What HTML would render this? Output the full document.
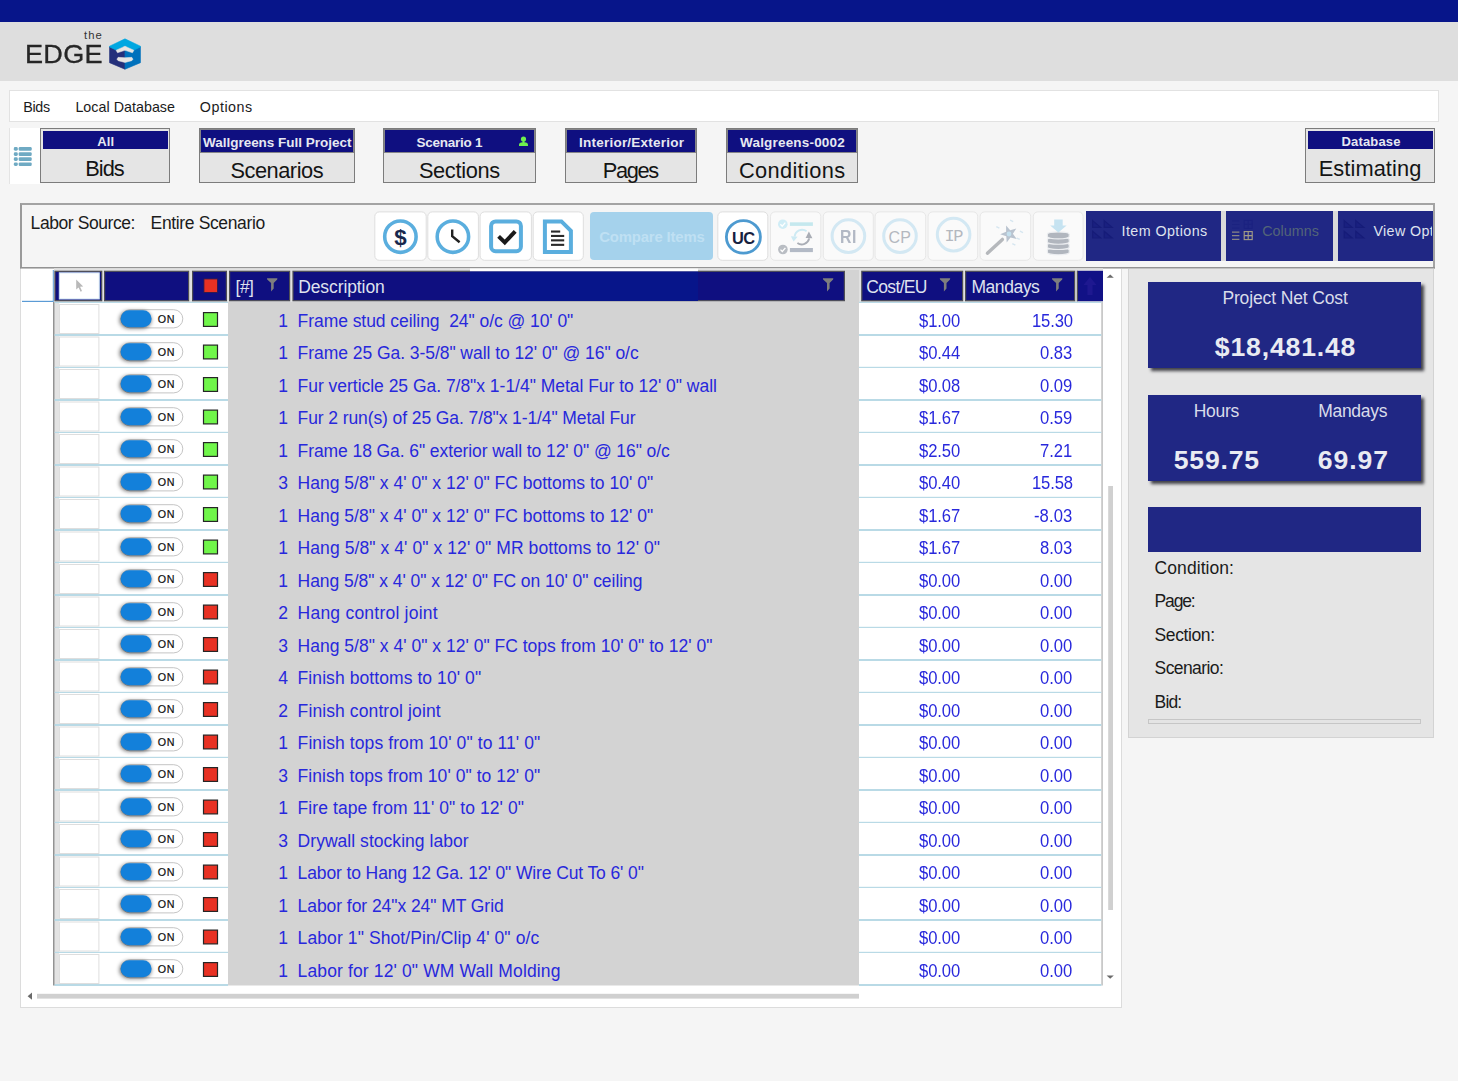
<!DOCTYPE html>
<html lang="en"><head><meta charset="utf-8"><title>The EDGE - Labor</title>
<style>
html,body{margin:0;padding:0;}
body{width:1458px;height:1081px;overflow:hidden;background:#f5f5f5;font-family:"Liberation Sans",sans-serif;}
#app{position:relative;width:1458px;height:1081px;overflow:hidden;background:#f5f5f5;}
.b{position:absolute;box-sizing:border-box;}
.t{position:absolute;white-space:pre;line-height:1;}
svg{position:absolute;overflow:visible;}

</style></head>
<body>
<div id="app">
<div class="b " style="left:0.00px;top:0.00px;width:1458.00px;height:22.00px;background:#07158a;"></div>
<div class="b " style="left:0.00px;top:22.00px;width:1458.00px;height:59.00px;background:#dedede;"></div>
<span id="t1" class="t " style="left:84.00px;top:30.00px;font-size:11.30px;color:#333;letter-spacing:1.041px;">the</span>
<span id="t2" class="t " style="left:24.60px;top:42.00px;font-size:25.20px;color:#262626;letter-spacing:0.265px;transform:scaleX(1.0750);transform-origin:0 0;-webkit-text-stroke:0.3px #262626;">EDGE</span>
<svg style="left:104px;top:34px" width="42" height="40" viewBox="104 34 42 40">
<polygon points="109.55,46.9 124.98,47 124.98,69.2 109.55,62.7" fill="#25307b" stroke="#25307b" stroke-width="0.6" stroke-linejoin="round"/>
<polygon points="140.45,46.9 124.98,47 124.98,69.2 140.45,62.7" fill="#0071bc" stroke="#0071bc" stroke-width="0.6" stroke-linejoin="round"/>
<polygon points="124.98,38.85 140.45,46.2 140.45,47.0 133.6,50.2 124.98,46.1 116.4,50.2 109.55,47.0 109.55,46.2" fill="#00a7e1" stroke="#00a7e1" stroke-width="0.6" stroke-linejoin="round"/>
<polygon points="124.98,46.2 133.9,50.3 132.5,52.75 124.98,50.3 117.5,52.75 116.1,50.3" fill="#e7e5e3" stroke="#e7e5e3" stroke-width="0.5" stroke-linejoin="round"/>
<polygon points="116.9,59.15 118.1,57.35 124.98,57.7 131.8,57.35 133.0,59.15 131.8,60.65 124.98,62.5 118.1,60.65" fill="#e7e5e3" stroke="#e7e5e3" stroke-width="0.5" stroke-linejoin="round"/>
</svg>
<div class="b " style="left:9.00px;top:90.00px;width:1430.00px;height:32.00px;background:#fff;border:1px solid #e2e2e2;"></div>
<span id="t3" class="t " style="left:23.20px;top:100.00px;font-size:14.30px;color:#1b1b1b;letter-spacing:-0.271px;">Bids</span>
<span id="t4" class="t " style="left:75.40px;top:100.00px;font-size:14.30px;color:#1b1b1b;letter-spacing:0.019px;">Local Database</span>
<span id="t5" class="t " style="left:199.80px;top:100.00px;font-size:14.30px;color:#1b1b1b;letter-spacing:0.520px;">Options</span>
<div class="b " style="left:9.00px;top:128.00px;width:31.00px;height:56.00px;background:#fff;border-left:1px solid #e4e4e4;"></div>
<svg style="left:0;top:0" width="40" height="190" viewBox="0 0 40 190"><rect x="13.8" y="147.1" width="4.0" height="3.6" rx="1.4" fill="#6faac3"/><rect x="18.7" y="147.1" width="13.0" height="3.6" rx="1.2" fill="#6faac3"/><rect x="13.8" y="152.3" width="4.0" height="3.6" rx="1.4" fill="#6faac3"/><rect x="18.7" y="152.3" width="13.0" height="3.6" rx="1.2" fill="#6faac3"/><rect x="13.8" y="157.3" width="4.0" height="3.6" rx="1.4" fill="#6faac3"/><rect x="18.7" y="157.3" width="13.0" height="3.6" rx="1.2" fill="#6faac3"/><rect x="13.8" y="162.4" width="4.0" height="3.6" rx="1.4" fill="#6faac3"/><rect x="18.7" y="162.4" width="13.0" height="3.6" rx="1.2" fill="#6faac3"/></svg>
<div class="b " style="left:40.00px;top:128.00px;width:130.00px;height:55.00px;background:#e5e5e5;border:1px solid #7c7c7c;"></div>
<div class="b " style="left:43.00px;top:131.00px;width:125.00px;height:18.00px;background:#0f0f80;"></div>
<span id="t6" class="t " style="left:97.20px;top:135.00px;font-size:13.00px;color:#e6e8f1;font-weight:bold;letter-spacing:0.188px;">All</span>
<span id="t7" class="t " style="left:85.30px;top:158.00px;font-size:21.80px;color:#141414;letter-spacing:-1.002px;">Bids</span>
<div class="b " style="left:199.00px;top:128.00px;width:156.00px;height:55.00px;background:#e5e5e5;border:1px solid #7c7c7c;"></div>
<div class="b " style="left:200.00px;top:129.00px;width:154.00px;height:24.00px;background:#0f0f80;border:1px solid #858588;"></div>
<span id="t8" class="t " style="left:203.00px;top:136.00px;font-size:13.50px;color:#e6e8f1;font-weight:bold;letter-spacing:-0.018px;">Wallgreens Full Project</span>
<span id="t9" class="t " style="left:230.40px;top:160.00px;font-size:21.80px;color:#141414;letter-spacing:-0.467px;">Scenarios</span>
<div class="b " style="left:383.00px;top:128.00px;width:153.00px;height:55.00px;background:#e5e5e5;border:1px solid #7c7c7c;"></div>
<div class="b " style="left:384.00px;top:129.00px;width:151.00px;height:24.00px;background:#0f0f80;border:1px solid #858588;"></div>
<span id="t10" class="t " style="left:416.50px;top:136.00px;font-size:13.50px;color:#e6e8f1;font-weight:bold;letter-spacing:-0.255px;">Scenario 1</span>
<span id="t11" class="t " style="left:418.90px;top:160.00px;font-size:21.80px;color:#141414;letter-spacing:-0.344px;">Sections</span>
<div class="b " style="left:565.00px;top:128.00px;width:132.00px;height:55.00px;background:#e5e5e5;border:1px solid #7c7c7c;"></div>
<div class="b " style="left:566.00px;top:129.00px;width:130.00px;height:24.00px;background:#0f0f80;border:1px solid #858588;"></div>
<span id="t12" class="t " style="left:579.00px;top:136.00px;font-size:13.50px;color:#e6e8f1;font-weight:bold;letter-spacing:0.232px;">Interior/Exterior</span>
<span id="t13" class="t " style="left:602.75px;top:160.00px;font-size:21.80px;color:#141414;letter-spacing:-1.328px;">Pages</span>
<div class="b " style="left:726.00px;top:128.00px;width:132.00px;height:55.00px;background:#e5e5e5;border:1px solid #7c7c7c;"></div>
<div class="b " style="left:727.00px;top:129.00px;width:130.00px;height:24.00px;background:#0f0f80;border:1px solid #858588;"></div>
<span id="t14" class="t " style="left:740.00px;top:136.00px;font-size:13.50px;color:#e6e8f1;font-weight:bold;letter-spacing:0.191px;">Walgreens-0002</span>
<span id="t15" class="t " style="left:738.90px;top:160.00px;font-size:21.80px;color:#141414;letter-spacing:0.356px;">Conditions</span>
<div class="b " style="left:1305.00px;top:128.00px;width:130.00px;height:55.00px;background:#e5e5e5;border:1px solid #7c7c7c;"></div>
<div class="b " style="left:1308.00px;top:131.00px;width:125.00px;height:18.00px;background:#0f0f80;"></div>
<span id="t16" class="t " style="left:1341.60px;top:135.00px;font-size:13.00px;color:#e6e8f1;font-weight:bold;letter-spacing:0.141px;">Database</span>
<span id="t17" class="t " style="left:1318.70px;top:158.00px;font-size:21.80px;color:#141414;letter-spacing:0.093px;">Estimating</span>
<svg style="left:516px;top:134px" width="16" height="16" viewBox="516 134 16 16">
<circle cx="523.5" cy="139.0" r="2.6" fill="#6eee4e"/>
<path d="M522.6,141 h1.8 v1.2 q3.6,0.3 3.6,2.6 v1.2 h-9 v-1.2 q0,-2.3 3.6,-2.6 Z" fill="#6eee4e"/></svg>
<div class="b " style="left:20.00px;top:267.00px;width:1102.00px;height:741.00px;background:#fff;border:1px solid #dcdcdc;"></div>
<div class="b " style="left:1128.00px;top:267.00px;width:306.00px;height:471.00px;background:#e5e5e5;border:1px solid #d3d3d3;"></div>
<div class="b " style="left:20.00px;top:203.00px;width:1415.00px;height:66.00px;background:#f5f5f5;border:2px solid #a3a3a3;border-bottom-color:#c2c2c2;border-left-color:#9a9a9a;"></div>
<div class="b " style="left:20.00px;top:267.00px;width:1415.00px;height:1.00px;background:#939393;"></div>
<span id="t18" class="t " style="left:30.60px;top:215.00px;font-size:17.50px;color:#1b1b1b;letter-spacing:-0.428px;">Labor Source:</span>
<span id="t19" class="t " style="left:150.60px;top:215.00px;font-size:17.50px;color:#1b1b1b;letter-spacing:-0.361px;">Entire Scenario</span>
<div class="b " style="left:590.20px;top:211.80px;width:122.60px;height:48.40px;background:#a5d2ec;border-radius:4px;"></div>
<span id="t20" class="t " style="left:599.20px;top:230.00px;font-size:14.90px;color:#bfe0f3;font-weight:bold;letter-spacing:-0.166px;">Compare Items</span>
<svg style="left:0;top:0" width="1458" height="300" viewBox="0 0 1458 300"><rect x="374.80" y="211.9" width="51.40" height="48.4" rx="4.5" fill="#fff" stroke="#dedede" stroke-width="1"/><rect x="427.80" y="211.9" width="50.60" height="48.4" rx="4.5" fill="#fff" stroke="#dedede" stroke-width="1"/><rect x="480.10" y="211.9" width="51.30" height="48.4" rx="4.5" fill="#fff" stroke="#dedede" stroke-width="1"/><rect x="533.20" y="211.9" width="50.10" height="48.4" rx="4.5" fill="#fff" stroke="#dedede" stroke-width="1"/><rect x="717.80" y="211.9" width="50.00" height="48.4" rx="4.5" fill="#fff" stroke="#dedede" stroke-width="1"/><rect x="770.50" y="211.9" width="50.30" height="48.4" rx="4.5" fill="#fafafa" stroke="#e7e7e7" stroke-width="1"/><rect x="823.30" y="211.9" width="50.00" height="48.4" rx="4.5" fill="#fafafa" stroke="#e7e7e7" stroke-width="1"/><rect x="875.10" y="211.9" width="50.60" height="48.4" rx="4.5" fill="#fafafa" stroke="#e7e7e7" stroke-width="1"/><rect x="928.10" y="211.9" width="49.60" height="48.4" rx="4.5" fill="#fafafa" stroke="#e7e7e7" stroke-width="1"/><rect x="980.10" y="211.9" width="50.60" height="48.4" rx="4.5" fill="#fafafa" stroke="#e7e7e7" stroke-width="1"/><rect x="1033.30" y="211.9" width="49.80" height="48.4" rx="4.5" fill="#fafafa" stroke="#e7e7e7" stroke-width="1"/><circle cx="400.4" cy="236.7" r="15.7" fill="none" stroke="#5aaede" stroke-width="3.6"/><circle cx="452.9" cy="236.7" r="15.7" fill="none" stroke="#5aaede" stroke-width="3.6"/><path d="M452.2,229.6 L452.2,236.2 L459.6,242.2" fill="none" stroke="#222" stroke-width="2.4"/><rect x="491.1" y="221.4" width="29.8" height="29.8" rx="4.5" fill="none" stroke="#5aaede" stroke-width="4"/><path d="M498.6,236.4 L504.8,242.4 L515.2,231.4" fill="none" stroke="#1a1a1a" stroke-width="4"/><path d="M544.9,221.4 L561.4,221.4 L570.9,230.9 L570.9,252 L544.9,252 Z" fill="none" stroke="#5aaede" stroke-width="4"/><rect x="551" y="230.5" width="9.2" height="2.1" fill="#2a2a2a"/><rect x="551" y="234.9" width="13.2" height="2.1" fill="#2a2a2a"/><rect x="551" y="239.3" width="13.2" height="2.1" fill="#2a2a2a"/><rect x="551" y="243.8" width="13.2" height="2.1" fill="#2a2a2a"/><ellipse cx="743.4" cy="236.9" rx="17" ry="16.3" fill="none" stroke="#4d9ad0" stroke-width="2.8"/><circle cx="782.8" cy="224.2" r="4.8" fill="#d0edf6"/><path d="M780.4,224.3 l1.8,1.9 l3.1,-3.6" fill="none" stroke="#fff" stroke-width="1.3"/><rect x="789.9" y="222.3" width="23" height="3.6" fill="#c5e8ee"/><circle cx="782.9" cy="249.5" r="4.8" fill="#b9bdc3"/><path d="M780.5,249.6 l1.8,1.9 l3.1,-3.6" fill="none" stroke="#fff" stroke-width="1.3"/><rect x="789.9" y="248" width="23" height="4.1" fill="#b3bac6"/><path d="M794.6,236.6 A7.6,7.6 0 0 1 806.6,231.2" fill="none" stroke="#cdeaf3" stroke-width="1.9"/><path d="M790.8,236.2 L797.6,236.8 L793.6,241.6 Z" fill="#cdeaf3"/><path d="M809.2,238.4 A7.6,7.6 0 0 1 797.4,243.0" fill="none" stroke="#a9adb5" stroke-width="1.9"/><path d="M808.9,231.6 L812.4,238.2 L805.6,238.0 Z" fill="#a9adb5"/><circle cx="848.4" cy="236.1" r="16.3" fill="none" stroke="#d3e8f3" stroke-width="3"/><circle cx="900.0" cy="236.1" r="16.3" fill="none" stroke="#d3e8f3" stroke-width="3"/><circle cx="953.6" cy="234.6" r="16.3" fill="none" stroke="#d3e8f3" stroke-width="3"/><path d="M987.4,253.2 L1002.4,239.4" stroke="#b5b8bc" stroke-width="3.4" stroke-linecap="round"/><polygon points="1006.1,225.4 1010.2,230.3 1016.3,228.4 1012.9,233.8 1016.7,238.9 1010.5,237.4 1006.7,242.6 1006.3,236.2 1000.2,234.2 1006.1,231.8" fill="#b9c3cf"/><circle cx="1009.0" cy="234.0" r="2.4" fill="#c4e0ee"/><rect x="996.6" y="226.0" width="3.4" height="1.4" fill="#d6e6f0" transform="rotate(25 996.6 226.0)"/><rect x="1010.4" y="219.6" width="3.4" height="1.4" fill="#d6e6f0" transform="rotate(25 1010.4 219.6)"/><rect x="1020.2" y="230.6" width="3.4" height="1.4" fill="#d6e6f0" transform="rotate(25 1020.2 230.6)"/><rect x="1012.6" y="243.0" width="3.4" height="1.4" fill="#d6e6f0" transform="rotate(25 1012.6 243.0)"/><rect x="1017.0" y="237.4" width="3.4" height="1.4" fill="#d6e6f0" transform="rotate(25 1017.0 237.4)"/><path d="M1047.4,250.1 a10.9,2.3 0 0 1 21.8,0 v2.4 a10.9,2.3 0 0 1 -21.8,0 Z" fill="#b1b6be" stroke="#eceef1" stroke-width="1.1"/><path d="M1047.4,244.8 a10.9,2.3 0 0 1 21.8,0 v2.4 a10.9,2.3 0 0 1 -21.8,0 Z" fill="#b1b6be" stroke="#eceef1" stroke-width="1.1"/><path d="M1047.4,239.5 a10.9,2.3 0 0 1 21.8,0 v2.4 a10.9,2.3 0 0 1 -21.8,0 Z" fill="#b1b6be" stroke="#eceef1" stroke-width="1.1"/><path d="M1047.4,234.2 a10.9,2.3 0 0 1 21.8,0 v2.4 a10.9,2.3 0 0 1 -21.8,0 Z" fill="#b1b6be" stroke="#eceef1" stroke-width="1.1"/><path d="M1054.2,219.4 L1062.7,219.4 L1062.7,225.6 L1066.6,225.6 L1058.4,232.6 L1050.2,225.6 L1054.2,225.6 Z" fill="#c6e3f1"/></svg>
<span id="t21" class="t " style="left:394.30px;top:227.00px;font-size:22.40px;color:#17284e;font-weight:bold;letter-spacing:-0.053px;">$</span>
<span id="t22" class="t " style="left:732.00px;top:230.00px;font-size:16.40px;color:#16213f;font-weight:bold;letter-spacing:-0.688px;">UC</span>
<span id="t23" class="t " style="left:840.20px;top:228.00px;font-size:18.00px;color:#b2b8c4;font-weight:bold;letter-spacing:0.636px;transform:scaleX(0.8800);transform-origin:0 0;">RI</span>
<span id="t24" class="t " style="left:888.60px;top:230.00px;font-size:16.00px;color:#b4b8bf;letter-spacing:0.166px;">CP</span>
<span id="t25" class="t " style="left:944.40px;top:228.00px;font-size:17.00px;color:#b4b8bf;letter-spacing:-1.406px;font-family:'Liberation Mono',monospace;">IP</span>
<div class="b " style="left:1086.00px;top:211.00px;width:347.00px;height:49.80px;background:#dadada;overflow:hidden;"><div class="b" style="left:0;top:0;width:135px;height:49.8px;background:#202784"></div><div class="b" style="left:140px;top:0;width:107px;height:49.8px;background:#202784"></div><div class="b" style="left:252px;top:0;width:95px;height:49.8px;background:#202784"></div></div>
<span id="t26" class="t " style="left:1121.60px;top:224.00px;font-size:14.30px;color:#dfe2ee;letter-spacing:0.412px;">Item Options</span>
<span id="t27" class="t " style="left:1262.20px;top:224.00px;font-size:14.30px;color:#536478;letter-spacing:0.063px;">Columns</span>
<div class="b " style="left:1373.00px;top:215.00px;width:59.40px;height:35.00px;overflow:hidden;"><span id="t28" class="t " style="left:0.40px;top:9.00px;font-size:14.30px;color:#dfe2ee;letter-spacing:0.365px;">View Options</span></div>
<svg style="left:0;top:0" width="1458" height="300" viewBox="0 0 1458 300"><path d="M1092.6,220.6 L1100.6,227.4 L1092.6,227.4 Z" fill="#1a2080" stroke="#161c78" stroke-width="1.2"/><path d="M1104.2,220.6 L1112.2,227.4 L1104.2,227.4 Z" fill="#1a2080" stroke="#161c78" stroke-width="1.2"/><path d="M1092.6,231.2 L1100.6,238.0 L1092.6,238.0 Z" fill="#1a2080" stroke="#161c78" stroke-width="1.2"/><path d="M1104.2,231.2 L1112.2,238.0 L1104.2,238.0 Z" fill="#1a2080" stroke="#161c78" stroke-width="1.2"/><path d="M1344.2,220.6 L1352.2,227.4 L1344.2,227.4 Z" fill="#1a2080" stroke="#161c78" stroke-width="1.2"/><path d="M1355.8,220.6 L1363.8,227.4 L1355.8,227.4 Z" fill="#1a2080" stroke="#161c78" stroke-width="1.2"/><path d="M1344.2,231.2 L1352.2,238.0 L1344.2,238.0 Z" fill="#1a2080" stroke="#161c78" stroke-width="1.2"/><path d="M1355.8,231.2 L1363.8,238.0 L1355.8,238.0 Z" fill="#1a2080" stroke="#161c78" stroke-width="1.2"/><rect x="1232" y="220.4" width="7.4" height="1" fill="#1b2280"/><rect x="1232" y="224.0" width="7.4" height="1" fill="#1b2280"/><rect x="1232" y="227.6" width="7.4" height="1" fill="#1b2280"/><rect x="1244.2" y="220.4" width="8" height="8" fill="none" stroke="#1b2280" stroke-width="1.1"/><path d="M1248.2,220.4 v8 M1244.2,224.4 h8" stroke="#1b2280" stroke-width="1.1"/><rect x="1232" y="231.6" width="7.4" height="1" fill="#a49e86"/><rect x="1232" y="235.2" width="7.4" height="1" fill="#a49e86"/><rect x="1232" y="238.8" width="7.4" height="1" fill="#a49e86"/><rect x="1244.2" y="231.6" width="8" height="8" fill="none" stroke="#a49e86" stroke-width="1.1"/><path d="M1248.2,231.6 v8 M1244.2,235.6 h8" stroke="#a49e86" stroke-width="1.1"/></svg>
<svg style="left:0;top:0" width="1458" height="1081" viewBox="0 0 1458 1081"><defs><filter id="tsh" x="-30%" y="-50%" width="160%" height="200%"><feGaussianBlur stdDeviation="2"/></filter></defs><rect x="54" y="268.2" width="1049" height="33.8" fill="#e1e1e1"/><rect x="228" y="302" width="631" height="683.5" fill="#d3d3d3"/><rect x="845" y="270" width="14" height="33" fill="#d3d3d3"/><rect x="52.8" y="270" width="1" height="32" fill="#5b9bd5"/><rect x="53.3" y="302" width="1.3" height="683.5" fill="#666"/><rect x="22" y="300.8" width="31" height="1.2" fill="#5b9bd5"/><rect x="54.6" y="302" width="4.6" height="682.5" fill="#e3e3e3"/><rect x="1101.2" y="302" width="1.8" height="683.5" fill="#c9c9c9"/><rect x="54.6" y="301.80" width="173.4" height="1.2" fill="#b9dae6"/><rect x="859" y="301.80" width="242.4" height="1.2" fill="#b9dae6"/><rect x="54.6" y="334.00" width="173.4" height="2.0" fill="#b9dae6"/><rect x="859" y="334.00" width="242.4" height="2.0" fill="#b9dae6"/><rect x="54.6" y="366.80" width="173.4" height="1.2" fill="#b9dae6"/><rect x="859" y="366.80" width="242.4" height="1.2" fill="#b9dae6"/><rect x="54.6" y="399.00" width="173.4" height="2.0" fill="#b9dae6"/><rect x="859" y="399.00" width="242.4" height="2.0" fill="#b9dae6"/><rect x="54.6" y="431.80" width="173.4" height="1.2" fill="#b9dae6"/><rect x="859" y="431.80" width="242.4" height="1.2" fill="#b9dae6"/><rect x="54.6" y="464.00" width="173.4" height="2.0" fill="#b9dae6"/><rect x="859" y="464.00" width="242.4" height="2.0" fill="#b9dae6"/><rect x="54.6" y="496.80" width="173.4" height="1.2" fill="#b9dae6"/><rect x="859" y="496.80" width="242.4" height="1.2" fill="#b9dae6"/><rect x="54.6" y="529.00" width="173.4" height="2.0" fill="#b9dae6"/><rect x="859" y="529.00" width="242.4" height="2.0" fill="#b9dae6"/><rect x="54.6" y="561.80" width="173.4" height="1.2" fill="#b9dae6"/><rect x="859" y="561.80" width="242.4" height="1.2" fill="#b9dae6"/><rect x="54.6" y="594.00" width="173.4" height="2.0" fill="#b9dae6"/><rect x="859" y="594.00" width="242.4" height="2.0" fill="#b9dae6"/><rect x="54.6" y="626.80" width="173.4" height="1.2" fill="#b9dae6"/><rect x="859" y="626.80" width="242.4" height="1.2" fill="#b9dae6"/><rect x="54.6" y="659.00" width="173.4" height="2.0" fill="#b9dae6"/><rect x="859" y="659.00" width="242.4" height="2.0" fill="#b9dae6"/><rect x="54.6" y="691.80" width="173.4" height="1.2" fill="#b9dae6"/><rect x="859" y="691.80" width="242.4" height="1.2" fill="#b9dae6"/><rect x="54.6" y="724.00" width="173.4" height="2.0" fill="#b9dae6"/><rect x="859" y="724.00" width="242.4" height="2.0" fill="#b9dae6"/><rect x="54.6" y="756.80" width="173.4" height="1.2" fill="#b9dae6"/><rect x="859" y="756.80" width="242.4" height="1.2" fill="#b9dae6"/><rect x="54.6" y="789.00" width="173.4" height="2.0" fill="#b9dae6"/><rect x="859" y="789.00" width="242.4" height="2.0" fill="#b9dae6"/><rect x="54.6" y="821.80" width="173.4" height="1.2" fill="#b9dae6"/><rect x="859" y="821.80" width="242.4" height="1.2" fill="#b9dae6"/><rect x="54.6" y="854.00" width="173.4" height="2.0" fill="#b9dae6"/><rect x="859" y="854.00" width="242.4" height="2.0" fill="#b9dae6"/><rect x="54.6" y="886.80" width="173.4" height="1.2" fill="#b9dae6"/><rect x="859" y="886.80" width="242.4" height="1.2" fill="#b9dae6"/><rect x="54.6" y="919.00" width="173.4" height="2.0" fill="#b9dae6"/><rect x="859" y="919.00" width="242.4" height="2.0" fill="#b9dae6"/><rect x="54.6" y="951.80" width="173.4" height="1.2" fill="#b9dae6"/><rect x="859" y="951.80" width="242.4" height="1.2" fill="#b9dae6"/><rect x="54.6" y="984.00" width="173.4" height="2.0" fill="#b9dae6"/><rect x="859" y="984.00" width="242.4" height="2.0" fill="#b9dae6"/><rect x="59.5" y="304.50" width="39.4" height="29.00" fill="#fff" stroke="#dedede" stroke-width="1"/><rect x="59.5" y="337.00" width="39.4" height="29.00" fill="#fff" stroke="#dedede" stroke-width="1"/><rect x="59.5" y="369.50" width="39.4" height="29.00" fill="#fff" stroke="#dedede" stroke-width="1"/><rect x="59.5" y="402.00" width="39.4" height="29.00" fill="#fff" stroke="#dedede" stroke-width="1"/><rect x="59.5" y="434.50" width="39.4" height="29.00" fill="#fff" stroke="#dedede" stroke-width="1"/><rect x="59.5" y="467.00" width="39.4" height="29.00" fill="#fff" stroke="#dedede" stroke-width="1"/><rect x="59.5" y="499.50" width="39.4" height="29.00" fill="#fff" stroke="#dedede" stroke-width="1"/><rect x="59.5" y="532.00" width="39.4" height="29.00" fill="#fff" stroke="#dedede" stroke-width="1"/><rect x="59.5" y="564.50" width="39.4" height="29.00" fill="#fff" stroke="#dedede" stroke-width="1"/><rect x="59.5" y="597.00" width="39.4" height="29.00" fill="#fff" stroke="#dedede" stroke-width="1"/><rect x="59.5" y="629.50" width="39.4" height="29.00" fill="#fff" stroke="#dedede" stroke-width="1"/><rect x="59.5" y="662.00" width="39.4" height="29.00" fill="#fff" stroke="#dedede" stroke-width="1"/><rect x="59.5" y="694.50" width="39.4" height="29.00" fill="#fff" stroke="#dedede" stroke-width="1"/><rect x="59.5" y="727.00" width="39.4" height="29.00" fill="#fff" stroke="#dedede" stroke-width="1"/><rect x="59.5" y="759.50" width="39.4" height="29.00" fill="#fff" stroke="#dedede" stroke-width="1"/><rect x="59.5" y="792.00" width="39.4" height="29.00" fill="#fff" stroke="#dedede" stroke-width="1"/><rect x="59.5" y="824.50" width="39.4" height="29.00" fill="#fff" stroke="#dedede" stroke-width="1"/><rect x="59.5" y="857.00" width="39.4" height="29.00" fill="#fff" stroke="#dedede" stroke-width="1"/><rect x="59.5" y="889.50" width="39.4" height="29.00" fill="#fff" stroke="#dedede" stroke-width="1"/><rect x="59.5" y="922.00" width="39.4" height="29.00" fill="#fff" stroke="#dedede" stroke-width="1"/><rect x="59.5" y="954.50" width="39.4" height="29.00" fill="#fff" stroke="#dedede" stroke-width="1"/><rect x="55.00" y="271.3" width="46.70" height="29.4" fill="#0f0f80" stroke="#4f4f55" stroke-width="1.2"/><rect x="104.60" y="271.3" width="84.00" height="29.4" fill="#0f0f80" stroke="#4f4f55" stroke-width="1.2"/><rect x="192.60" y="271.3" width="33.80" height="29.4" fill="#0f0f80" stroke="#4f4f55" stroke-width="1.2"/><rect x="229.60" y="271.3" width="60.00" height="29.4" fill="#0f0f80" stroke="#4f4f55" stroke-width="1.2"/><rect x="293.00" y="271.3" width="551.40" height="29.4" fill="#0f0f80" stroke="#4f4f55" stroke-width="1.2"/><rect x="861.80" y="271.3" width="100.80" height="29.4" fill="#0f0f80" stroke="#4f4f55" stroke-width="1.2"/><rect x="965.60" y="271.3" width="109.00" height="29.4" fill="#0f0f80" stroke="#4f4f55" stroke-width="1.2"/><rect x="1077.3" y="270.8" width="25.7" height="30.4" fill="#111186"/><rect x="1076.8" y="270.8" width="1.2" height="30.4" fill="#4f4f55"/><rect x="470" y="268.6" width="228" height="3" fill="#fdfdfd"/><rect x="470" y="271.4" width="228" height="29.6" fill="#07158a"/><path d="M1090,277 L1096.5,285 L1092.6,285 L1092.6,295 L1087.4,295 L1087.4,285 L1083.5,285 Z" fill="#1e1890"/><rect x="59.3" y="272.8" width="40" height="26.2" fill="#fff" stroke="#c9dff0" stroke-width="1"/><path d="M76.2,279.4 L76.2,289.6 L78.6,287.4 L80.6,291.8 L82.0,291.1 L80.1,286.8 L83.2,286.6 Z" fill="#b9b9b9"/><rect x="203.9" y="278.9" width="13.6" height="13.6" fill="#e83123" stroke="#2a1a50" stroke-width="0.9"/><path d="M267.0,278.2 h10.4 l-0.2,1.2 l-3.5,3.6 v5.6 l-2.6,3.0 v-8.6 l-3.9,-3.6 Z" fill="#7e7e7e"/><path d="M822.9,278.2 h10.4 l-0.2,1.2 l-3.5,3.6 v5.6 l-2.6,3.0 v-8.6 l-3.9,-3.6 Z" fill="#7e7e7e"/><path d="M939.8,278.2 h10.4 l-0.2,1.2 l-3.5,3.6 v5.6 l-2.6,3.0 v-8.6 l-3.9,-3.6 Z" fill="#7e7e7e"/><path d="M1052.0,278.2 h10.4 l-0.2,1.2 l-3.5,3.6 v5.6 l-2.6,3.0 v-8.6 l-3.9,-3.6 Z" fill="#7e7e7e"/><rect x="121.0" y="309.70" width="61.8" height="18.2" rx="9.1" fill="#fff" stroke="#bdbdbd" stroke-width="0.9"/><rect x="119.6" y="311.30" width="31.6" height="17" rx="8.5" fill="#000" opacity="0.6" filter="url(#tsh)"/><rect x="120.6" y="310.20" width="31" height="17" rx="8.5" fill="#1380da"/><rect x="203.5" y="312.60" width="14" height="13.8" fill="#70f64a" stroke="#262626" stroke-width="1.2"/><rect x="121.0" y="342.70" width="61.8" height="18.2" rx="9.1" fill="#fff" stroke="#bdbdbd" stroke-width="0.9"/><rect x="119.6" y="344.30" width="31.6" height="17" rx="8.5" fill="#000" opacity="0.6" filter="url(#tsh)"/><rect x="120.6" y="343.20" width="31" height="17" rx="8.5" fill="#1380da"/><rect x="203.5" y="345.10" width="14" height="13.8" fill="#70f64a" stroke="#262626" stroke-width="1.2"/><rect x="121.0" y="374.70" width="61.8" height="18.2" rx="9.1" fill="#fff" stroke="#bdbdbd" stroke-width="0.9"/><rect x="119.6" y="376.30" width="31.6" height="17" rx="8.5" fill="#000" opacity="0.6" filter="url(#tsh)"/><rect x="120.6" y="375.20" width="31" height="17" rx="8.5" fill="#1380da"/><rect x="203.5" y="377.60" width="14" height="13.8" fill="#70f64a" stroke="#262626" stroke-width="1.2"/><rect x="121.0" y="407.70" width="61.8" height="18.2" rx="9.1" fill="#fff" stroke="#bdbdbd" stroke-width="0.9"/><rect x="119.6" y="409.30" width="31.6" height="17" rx="8.5" fill="#000" opacity="0.6" filter="url(#tsh)"/><rect x="120.6" y="408.20" width="31" height="17" rx="8.5" fill="#1380da"/><rect x="203.5" y="410.10" width="14" height="13.8" fill="#70f64a" stroke="#262626" stroke-width="1.2"/><rect x="121.0" y="439.70" width="61.8" height="18.2" rx="9.1" fill="#fff" stroke="#bdbdbd" stroke-width="0.9"/><rect x="119.6" y="441.30" width="31.6" height="17" rx="8.5" fill="#000" opacity="0.6" filter="url(#tsh)"/><rect x="120.6" y="440.20" width="31" height="17" rx="8.5" fill="#1380da"/><rect x="203.5" y="442.60" width="14" height="13.8" fill="#70f64a" stroke="#262626" stroke-width="1.2"/><rect x="121.0" y="472.70" width="61.8" height="18.2" rx="9.1" fill="#fff" stroke="#bdbdbd" stroke-width="0.9"/><rect x="119.6" y="474.30" width="31.6" height="17" rx="8.5" fill="#000" opacity="0.6" filter="url(#tsh)"/><rect x="120.6" y="473.20" width="31" height="17" rx="8.5" fill="#1380da"/><rect x="203.5" y="475.10" width="14" height="13.8" fill="#70f64a" stroke="#262626" stroke-width="1.2"/><rect x="121.0" y="504.70" width="61.8" height="18.2" rx="9.1" fill="#fff" stroke="#bdbdbd" stroke-width="0.9"/><rect x="119.6" y="506.30" width="31.6" height="17" rx="8.5" fill="#000" opacity="0.6" filter="url(#tsh)"/><rect x="120.6" y="505.20" width="31" height="17" rx="8.5" fill="#1380da"/><rect x="203.5" y="507.60" width="14" height="13.8" fill="#70f64a" stroke="#262626" stroke-width="1.2"/><rect x="121.0" y="537.70" width="61.8" height="18.2" rx="9.1" fill="#fff" stroke="#bdbdbd" stroke-width="0.9"/><rect x="119.6" y="539.30" width="31.6" height="17" rx="8.5" fill="#000" opacity="0.6" filter="url(#tsh)"/><rect x="120.6" y="538.20" width="31" height="17" rx="8.5" fill="#1380da"/><rect x="203.5" y="540.10" width="14" height="13.8" fill="#70f64a" stroke="#262626" stroke-width="1.2"/><rect x="121.0" y="569.70" width="61.8" height="18.2" rx="9.1" fill="#fff" stroke="#bdbdbd" stroke-width="0.9"/><rect x="119.6" y="571.30" width="31.6" height="17" rx="8.5" fill="#000" opacity="0.6" filter="url(#tsh)"/><rect x="120.6" y="570.20" width="31" height="17" rx="8.5" fill="#1380da"/><rect x="203.5" y="572.60" width="14" height="13.8" fill="#e83123" stroke="#262626" stroke-width="1.2"/><rect x="121.0" y="602.70" width="61.8" height="18.2" rx="9.1" fill="#fff" stroke="#bdbdbd" stroke-width="0.9"/><rect x="119.6" y="604.30" width="31.6" height="17" rx="8.5" fill="#000" opacity="0.6" filter="url(#tsh)"/><rect x="120.6" y="603.20" width="31" height="17" rx="8.5" fill="#1380da"/><rect x="203.5" y="605.10" width="14" height="13.8" fill="#e83123" stroke="#262626" stroke-width="1.2"/><rect x="121.0" y="634.70" width="61.8" height="18.2" rx="9.1" fill="#fff" stroke="#bdbdbd" stroke-width="0.9"/><rect x="119.6" y="636.30" width="31.6" height="17" rx="8.5" fill="#000" opacity="0.6" filter="url(#tsh)"/><rect x="120.6" y="635.20" width="31" height="17" rx="8.5" fill="#1380da"/><rect x="203.5" y="637.60" width="14" height="13.8" fill="#e83123" stroke="#262626" stroke-width="1.2"/><rect x="121.0" y="667.70" width="61.8" height="18.2" rx="9.1" fill="#fff" stroke="#bdbdbd" stroke-width="0.9"/><rect x="119.6" y="669.30" width="31.6" height="17" rx="8.5" fill="#000" opacity="0.6" filter="url(#tsh)"/><rect x="120.6" y="668.20" width="31" height="17" rx="8.5" fill="#1380da"/><rect x="203.5" y="670.10" width="14" height="13.8" fill="#e83123" stroke="#262626" stroke-width="1.2"/><rect x="121.0" y="699.70" width="61.8" height="18.2" rx="9.1" fill="#fff" stroke="#bdbdbd" stroke-width="0.9"/><rect x="119.6" y="701.30" width="31.6" height="17" rx="8.5" fill="#000" opacity="0.6" filter="url(#tsh)"/><rect x="120.6" y="700.20" width="31" height="17" rx="8.5" fill="#1380da"/><rect x="203.5" y="702.60" width="14" height="13.8" fill="#e83123" stroke="#262626" stroke-width="1.2"/><rect x="121.0" y="732.70" width="61.8" height="18.2" rx="9.1" fill="#fff" stroke="#bdbdbd" stroke-width="0.9"/><rect x="119.6" y="734.30" width="31.6" height="17" rx="8.5" fill="#000" opacity="0.6" filter="url(#tsh)"/><rect x="120.6" y="733.20" width="31" height="17" rx="8.5" fill="#1380da"/><rect x="203.5" y="735.10" width="14" height="13.8" fill="#e83123" stroke="#262626" stroke-width="1.2"/><rect x="121.0" y="764.70" width="61.8" height="18.2" rx="9.1" fill="#fff" stroke="#bdbdbd" stroke-width="0.9"/><rect x="119.6" y="766.30" width="31.6" height="17" rx="8.5" fill="#000" opacity="0.6" filter="url(#tsh)"/><rect x="120.6" y="765.20" width="31" height="17" rx="8.5" fill="#1380da"/><rect x="203.5" y="767.60" width="14" height="13.8" fill="#e83123" stroke="#262626" stroke-width="1.2"/><rect x="121.0" y="797.70" width="61.8" height="18.2" rx="9.1" fill="#fff" stroke="#bdbdbd" stroke-width="0.9"/><rect x="119.6" y="799.30" width="31.6" height="17" rx="8.5" fill="#000" opacity="0.6" filter="url(#tsh)"/><rect x="120.6" y="798.20" width="31" height="17" rx="8.5" fill="#1380da"/><rect x="203.5" y="800.10" width="14" height="13.8" fill="#e83123" stroke="#262626" stroke-width="1.2"/><rect x="121.0" y="829.70" width="61.8" height="18.2" rx="9.1" fill="#fff" stroke="#bdbdbd" stroke-width="0.9"/><rect x="119.6" y="831.30" width="31.6" height="17" rx="8.5" fill="#000" opacity="0.6" filter="url(#tsh)"/><rect x="120.6" y="830.20" width="31" height="17" rx="8.5" fill="#1380da"/><rect x="203.5" y="832.60" width="14" height="13.8" fill="#e83123" stroke="#262626" stroke-width="1.2"/><rect x="121.0" y="862.70" width="61.8" height="18.2" rx="9.1" fill="#fff" stroke="#bdbdbd" stroke-width="0.9"/><rect x="119.6" y="864.30" width="31.6" height="17" rx="8.5" fill="#000" opacity="0.6" filter="url(#tsh)"/><rect x="120.6" y="863.20" width="31" height="17" rx="8.5" fill="#1380da"/><rect x="203.5" y="865.10" width="14" height="13.8" fill="#e83123" stroke="#262626" stroke-width="1.2"/><rect x="121.0" y="894.70" width="61.8" height="18.2" rx="9.1" fill="#fff" stroke="#bdbdbd" stroke-width="0.9"/><rect x="119.6" y="896.30" width="31.6" height="17" rx="8.5" fill="#000" opacity="0.6" filter="url(#tsh)"/><rect x="120.6" y="895.20" width="31" height="17" rx="8.5" fill="#1380da"/><rect x="203.5" y="897.60" width="14" height="13.8" fill="#e83123" stroke="#262626" stroke-width="1.2"/><rect x="121.0" y="927.70" width="61.8" height="18.2" rx="9.1" fill="#fff" stroke="#bdbdbd" stroke-width="0.9"/><rect x="119.6" y="929.30" width="31.6" height="17" rx="8.5" fill="#000" opacity="0.6" filter="url(#tsh)"/><rect x="120.6" y="928.20" width="31" height="17" rx="8.5" fill="#1380da"/><rect x="203.5" y="930.10" width="14" height="13.8" fill="#e83123" stroke="#262626" stroke-width="1.2"/><rect x="121.0" y="959.70" width="61.8" height="18.2" rx="9.1" fill="#fff" stroke="#bdbdbd" stroke-width="0.9"/><rect x="119.6" y="961.30" width="31.6" height="17" rx="8.5" fill="#000" opacity="0.6" filter="url(#tsh)"/><rect x="120.6" y="960.20" width="31" height="17" rx="8.5" fill="#1380da"/><rect x="203.5" y="962.60" width="14" height="13.8" fill="#e83123" stroke="#262626" stroke-width="1.2"/><path d="M1106.6,277.8 L1110.2,274.6 L1113.8,277.8 Z" fill="#6a6a6a"/><path d="M1106.6,975.6 L1110.2,978.8 L1113.8,975.6 Z" fill="#6a6a6a"/><rect x="1108.2" y="486" width="4.8" height="424" fill="#d0d0d0"/><path d="M32,992.6 L27.6,996.2 L32,999.8 Z" fill="#6a6a6a"/><rect x="37" y="993.8" width="822" height="4.8" fill="#d0d0d0"/></svg>
<span id="t29" class="t " style="left:235.60px;top:279.00px;font-size:17.50px;color:#dfe2ee;letter-spacing:-0.534px;">[#]</span>
<span id="t30" class="t " style="left:298.20px;top:279.00px;font-size:17.50px;color:#dfe2ee;letter-spacing:-0.095px;">Description</span>
<span id="t31" class="t " style="left:866.30px;top:279.00px;font-size:17.50px;color:#dfe2ee;letter-spacing:-0.659px;">Cost/EU</span>
<span id="t32" class="t " style="left:971.50px;top:279.00px;font-size:17.50px;color:#dfe2ee;letter-spacing:-0.469px;">Mandays</span>
<span id="t33" class="t " style="left:157.70px;top:314.00px;font-size:10.70px;color:#0c0c0c;letter-spacing:0.869px;-webkit-text-stroke:0.18px #0c0c0c;">ON</span>
<span id="t34" class="t " style="left:278.20px;top:313.00px;font-size:17.50px;color:#2828dc;">1</span>
<span id="t35" class="t " style="left:297.60px;top:313.00px;font-size:17.50px;color:#2828dc;letter-spacing:-0.057px;">Frame stud ceiling  24" o/c @ 10' 0"</span>
<span id="t36" class="t " style="left:919.40px;top:313.00px;font-size:17.50px;color:#2828dc;letter-spacing:-0.107px;transform:scaleX(0.9500);transform-origin:0 0;">$1.00</span>
<span id="t37" class="t " style="left:1031.60px;top:313.00px;font-size:17.50px;color:#2828dc;letter-spacing:-0.160px;transform:scaleX(0.9500);transform-origin:0 0;">15.30</span>
<span id="t38" class="t " style="left:157.70px;top:347.00px;font-size:10.70px;color:#0c0c0c;letter-spacing:0.869px;-webkit-text-stroke:0.18px #0c0c0c;">ON</span>
<span id="t39" class="t " style="left:278.20px;top:345.00px;font-size:17.50px;color:#2828dc;">1</span>
<span id="t40" class="t " style="left:297.60px;top:345.00px;font-size:17.50px;color:#2828dc;letter-spacing:-0.050px;">Frame 25 Ga. 3-5/8" wall to 12' 0" @ 16" o/c</span>
<span id="t41" class="t " style="left:919.40px;top:345.00px;font-size:17.50px;color:#2828dc;letter-spacing:-0.107px;transform:scaleX(0.9500);transform-origin:0 0;">$0.44</span>
<span id="t42" class="t " style="left:1040.40px;top:345.00px;font-size:17.50px;color:#2828dc;letter-spacing:-0.056px;transform:scaleX(0.9500);transform-origin:0 0;">0.83</span>
<span id="t43" class="t " style="left:157.70px;top:379.00px;font-size:10.70px;color:#0c0c0c;letter-spacing:0.869px;-webkit-text-stroke:0.18px #0c0c0c;">ON</span>
<span id="t44" class="t " style="left:278.20px;top:378.00px;font-size:17.50px;color:#2828dc;">1</span>
<span id="t45" class="t " style="left:297.60px;top:378.00px;font-size:17.50px;color:#2828dc;letter-spacing:-0.026px;">Fur verticle 25 Ga. 7/8"x 1-1/4" Metal Fur to 12' 0" wall</span>
<span id="t46" class="t " style="left:919.40px;top:378.00px;font-size:17.50px;color:#2828dc;letter-spacing:-0.107px;transform:scaleX(0.9500);transform-origin:0 0;">$0.08</span>
<span id="t47" class="t " style="left:1040.40px;top:378.00px;font-size:17.50px;color:#2828dc;letter-spacing:-0.056px;transform:scaleX(0.9500);transform-origin:0 0;">0.09</span>
<span id="t48" class="t " style="left:157.70px;top:412.00px;font-size:10.70px;color:#0c0c0c;letter-spacing:0.869px;-webkit-text-stroke:0.18px #0c0c0c;">ON</span>
<span id="t49" class="t " style="left:278.20px;top:410.00px;font-size:17.50px;color:#2828dc;">1</span>
<span id="t50" class="t " style="left:297.60px;top:410.00px;font-size:17.50px;color:#2828dc;letter-spacing:-0.096px;">Fur 2 run(s) of 25 Ga. 7/8"x 1-1/4" Metal Fur</span>
<span id="t51" class="t " style="left:919.40px;top:410.00px;font-size:17.50px;color:#2828dc;letter-spacing:-0.107px;transform:scaleX(0.9500);transform-origin:0 0;">$1.67</span>
<span id="t52" class="t " style="left:1040.40px;top:410.00px;font-size:17.50px;color:#2828dc;letter-spacing:-0.056px;transform:scaleX(0.9500);transform-origin:0 0;">0.59</span>
<span id="t53" class="t " style="left:157.70px;top:444.00px;font-size:10.70px;color:#0c0c0c;letter-spacing:0.869px;-webkit-text-stroke:0.18px #0c0c0c;">ON</span>
<span id="t54" class="t " style="left:278.20px;top:443.00px;font-size:17.50px;color:#2828dc;">1</span>
<span id="t55" class="t " style="left:297.60px;top:443.00px;font-size:17.50px;color:#2828dc;letter-spacing:-0.087px;">Frame 18 Ga. 6" exterior wall to 12' 0" @ 16" o/c</span>
<span id="t56" class="t " style="left:919.40px;top:443.00px;font-size:17.50px;color:#2828dc;letter-spacing:-0.107px;transform:scaleX(0.9500);transform-origin:0 0;">$2.50</span>
<span id="t57" class="t " style="left:1040.40px;top:443.00px;font-size:17.50px;color:#2828dc;letter-spacing:-0.056px;transform:scaleX(0.9500);transform-origin:0 0;">7.21</span>
<span id="t58" class="t " style="left:157.70px;top:477.00px;font-size:10.70px;color:#0c0c0c;letter-spacing:0.869px;-webkit-text-stroke:0.18px #0c0c0c;">ON</span>
<span id="t59" class="t " style="left:278.20px;top:475.00px;font-size:17.50px;color:#2828dc;">3</span>
<span id="t60" class="t " style="left:297.60px;top:475.00px;font-size:17.50px;color:#2828dc;letter-spacing:0.013px;">Hang 5/8" x 4' 0" x 12' 0" FC bottoms to 10' 0"</span>
<span id="t61" class="t " style="left:919.40px;top:475.00px;font-size:17.50px;color:#2828dc;letter-spacing:-0.107px;transform:scaleX(0.9500);transform-origin:0 0;">$0.40</span>
<span id="t62" class="t " style="left:1031.60px;top:475.00px;font-size:17.50px;color:#2828dc;letter-spacing:-0.160px;transform:scaleX(0.9500);transform-origin:0 0;">15.58</span>
<span id="t63" class="t " style="left:157.70px;top:509.00px;font-size:10.70px;color:#0c0c0c;letter-spacing:0.869px;-webkit-text-stroke:0.18px #0c0c0c;">ON</span>
<span id="t64" class="t " style="left:278.20px;top:508.00px;font-size:17.50px;color:#2828dc;">1</span>
<span id="t65" class="t " style="left:297.60px;top:508.00px;font-size:17.50px;color:#2828dc;letter-spacing:0.013px;">Hang 5/8" x 4' 0" x 12' 0" FC bottoms to 12' 0"</span>
<span id="t66" class="t " style="left:919.40px;top:508.00px;font-size:17.50px;color:#2828dc;letter-spacing:-0.107px;transform:scaleX(0.9500);transform-origin:0 0;">$1.67</span>
<span id="t67" class="t " style="left:1034.40px;top:508.00px;font-size:17.50px;color:#2828dc;letter-spacing:0.080px;transform:scaleX(0.9500);transform-origin:0 0;">-8.03</span>
<span id="t68" class="t " style="left:157.70px;top:542.00px;font-size:10.70px;color:#0c0c0c;letter-spacing:0.869px;-webkit-text-stroke:0.18px #0c0c0c;">ON</span>
<span id="t69" class="t " style="left:278.20px;top:540.00px;font-size:17.50px;color:#2828dc;">1</span>
<span id="t70" class="t " style="left:297.60px;top:540.00px;font-size:17.50px;color:#2828dc;letter-spacing:0.080px;">Hang 5/8" x 4' 0" x 12' 0" MR bottoms to 12' 0"</span>
<span id="t71" class="t " style="left:919.40px;top:540.00px;font-size:17.50px;color:#2828dc;letter-spacing:-0.107px;transform:scaleX(0.9500);transform-origin:0 0;">$1.67</span>
<span id="t72" class="t " style="left:1040.40px;top:540.00px;font-size:17.50px;color:#2828dc;letter-spacing:-0.056px;transform:scaleX(0.9500);transform-origin:0 0;">8.03</span>
<span id="t73" class="t " style="left:157.70px;top:574.00px;font-size:10.70px;color:#0c0c0c;letter-spacing:0.869px;-webkit-text-stroke:0.18px #0c0c0c;">ON</span>
<span id="t74" class="t " style="left:278.20px;top:573.00px;font-size:17.50px;color:#2828dc;">1</span>
<span id="t75" class="t " style="left:297.60px;top:573.00px;font-size:17.50px;color:#2828dc;letter-spacing:-0.049px;">Hang 5/8" x 4' 0" x 12' 0" FC on 10' 0" ceiling</span>
<span id="t76" class="t " style="left:919.40px;top:573.00px;font-size:17.50px;color:#2828dc;letter-spacing:-0.107px;transform:scaleX(0.9500);transform-origin:0 0;">$0.00</span>
<span id="t77" class="t " style="left:1040.40px;top:573.00px;font-size:17.50px;color:#2828dc;letter-spacing:-0.056px;transform:scaleX(0.9500);transform-origin:0 0;">0.00</span>
<span id="t78" class="t " style="left:157.70px;top:607.00px;font-size:10.70px;color:#0c0c0c;letter-spacing:0.869px;-webkit-text-stroke:0.18px #0c0c0c;">ON</span>
<span id="t79" class="t " style="left:278.20px;top:605.00px;font-size:17.50px;color:#2828dc;">2</span>
<span id="t80" class="t " style="left:297.60px;top:605.00px;font-size:17.50px;color:#2828dc;letter-spacing:0.223px;">Hang control joint</span>
<span id="t81" class="t " style="left:919.40px;top:605.00px;font-size:17.50px;color:#2828dc;letter-spacing:-0.107px;transform:scaleX(0.9500);transform-origin:0 0;">$0.00</span>
<span id="t82" class="t " style="left:1040.40px;top:605.00px;font-size:17.50px;color:#2828dc;letter-spacing:-0.056px;transform:scaleX(0.9500);transform-origin:0 0;">0.00</span>
<span id="t83" class="t " style="left:157.70px;top:639.00px;font-size:10.70px;color:#0c0c0c;letter-spacing:0.869px;-webkit-text-stroke:0.18px #0c0c0c;">ON</span>
<span id="t84" class="t " style="left:278.20px;top:638.00px;font-size:17.50px;color:#2828dc;">3</span>
<span id="t85" class="t " style="left:297.60px;top:638.00px;font-size:17.50px;color:#2828dc;letter-spacing:0.013px;">Hang 5/8" x 4' 0" x 12' 0" FC tops from 10' 0" to 12' 0"</span>
<span id="t86" class="t " style="left:919.40px;top:638.00px;font-size:17.50px;color:#2828dc;letter-spacing:-0.107px;transform:scaleX(0.9500);transform-origin:0 0;">$0.00</span>
<span id="t87" class="t " style="left:1040.40px;top:638.00px;font-size:17.50px;color:#2828dc;letter-spacing:-0.056px;transform:scaleX(0.9500);transform-origin:0 0;">0.00</span>
<span id="t88" class="t " style="left:157.70px;top:672.00px;font-size:10.70px;color:#0c0c0c;letter-spacing:0.869px;-webkit-text-stroke:0.18px #0c0c0c;">ON</span>
<span id="t89" class="t " style="left:278.20px;top:670.00px;font-size:17.50px;color:#2828dc;">4</span>
<span id="t90" class="t " style="left:297.60px;top:670.00px;font-size:17.50px;color:#2828dc;letter-spacing:0.077px;">Finish bottoms to 10' 0"</span>
<span id="t91" class="t " style="left:919.40px;top:670.00px;font-size:17.50px;color:#2828dc;letter-spacing:-0.107px;transform:scaleX(0.9500);transform-origin:0 0;">$0.00</span>
<span id="t92" class="t " style="left:1040.40px;top:670.00px;font-size:17.50px;color:#2828dc;letter-spacing:-0.056px;transform:scaleX(0.9500);transform-origin:0 0;">0.00</span>
<span id="t93" class="t " style="left:157.70px;top:704.00px;font-size:10.70px;color:#0c0c0c;letter-spacing:0.869px;-webkit-text-stroke:0.18px #0c0c0c;">ON</span>
<span id="t94" class="t " style="left:278.20px;top:703.00px;font-size:17.50px;color:#2828dc;">2</span>
<span id="t95" class="t " style="left:297.60px;top:703.00px;font-size:17.50px;color:#2828dc;letter-spacing:0.103px;">Finish control joint</span>
<span id="t96" class="t " style="left:919.40px;top:703.00px;font-size:17.50px;color:#2828dc;letter-spacing:-0.107px;transform:scaleX(0.9500);transform-origin:0 0;">$0.00</span>
<span id="t97" class="t " style="left:1040.40px;top:703.00px;font-size:17.50px;color:#2828dc;letter-spacing:-0.056px;transform:scaleX(0.9500);transform-origin:0 0;">0.00</span>
<span id="t98" class="t " style="left:157.70px;top:737.00px;font-size:10.70px;color:#0c0c0c;letter-spacing:0.869px;-webkit-text-stroke:0.18px #0c0c0c;">ON</span>
<span id="t99" class="t " style="left:278.20px;top:735.00px;font-size:17.50px;color:#2828dc;">1</span>
<span id="t100" class="t " style="left:297.60px;top:735.00px;font-size:17.50px;color:#2828dc;letter-spacing:0.094px;">Finish tops from 10' 0" to 11' 0"</span>
<span id="t101" class="t " style="left:919.40px;top:735.00px;font-size:17.50px;color:#2828dc;letter-spacing:-0.107px;transform:scaleX(0.9500);transform-origin:0 0;">$0.00</span>
<span id="t102" class="t " style="left:1040.40px;top:735.00px;font-size:17.50px;color:#2828dc;letter-spacing:-0.056px;transform:scaleX(0.9500);transform-origin:0 0;">0.00</span>
<span id="t103" class="t " style="left:157.70px;top:769.00px;font-size:10.70px;color:#0c0c0c;letter-spacing:0.869px;-webkit-text-stroke:0.18px #0c0c0c;">ON</span>
<span id="t104" class="t " style="left:278.20px;top:768.00px;font-size:17.50px;color:#2828dc;">3</span>
<span id="t105" class="t " style="left:297.60px;top:768.00px;font-size:17.50px;color:#2828dc;letter-spacing:0.053px;">Finish tops from 10' 0" to 12' 0"</span>
<span id="t106" class="t " style="left:919.40px;top:768.00px;font-size:17.50px;color:#2828dc;letter-spacing:-0.107px;transform:scaleX(0.9500);transform-origin:0 0;">$0.00</span>
<span id="t107" class="t " style="left:1040.40px;top:768.00px;font-size:17.50px;color:#2828dc;letter-spacing:-0.056px;transform:scaleX(0.9500);transform-origin:0 0;">0.00</span>
<span id="t108" class="t " style="left:157.70px;top:802.00px;font-size:10.70px;color:#0c0c0c;letter-spacing:0.869px;-webkit-text-stroke:0.18px #0c0c0c;">ON</span>
<span id="t109" class="t " style="left:278.20px;top:800.00px;font-size:17.50px;color:#2828dc;">1</span>
<span id="t110" class="t " style="left:297.60px;top:800.00px;font-size:17.50px;color:#2828dc;letter-spacing:0.079px;">Fire tape from 11' 0" to 12' 0"</span>
<span id="t111" class="t " style="left:919.40px;top:800.00px;font-size:17.50px;color:#2828dc;letter-spacing:-0.107px;transform:scaleX(0.9500);transform-origin:0 0;">$0.00</span>
<span id="t112" class="t " style="left:1040.40px;top:800.00px;font-size:17.50px;color:#2828dc;letter-spacing:-0.056px;transform:scaleX(0.9500);transform-origin:0 0;">0.00</span>
<span id="t113" class="t " style="left:157.70px;top:834.00px;font-size:10.70px;color:#0c0c0c;letter-spacing:0.869px;-webkit-text-stroke:0.18px #0c0c0c;">ON</span>
<span id="t114" class="t " style="left:278.20px;top:833.00px;font-size:17.50px;color:#2828dc;">3</span>
<span id="t115" class="t " style="left:297.60px;top:833.00px;font-size:17.50px;color:#2828dc;letter-spacing:0.038px;">Drywall stocking labor</span>
<span id="t116" class="t " style="left:919.40px;top:833.00px;font-size:17.50px;color:#2828dc;letter-spacing:-0.107px;transform:scaleX(0.9500);transform-origin:0 0;">$0.00</span>
<span id="t117" class="t " style="left:1040.40px;top:833.00px;font-size:17.50px;color:#2828dc;letter-spacing:-0.056px;transform:scaleX(0.9500);transform-origin:0 0;">0.00</span>
<span id="t118" class="t " style="left:157.70px;top:867.00px;font-size:10.70px;color:#0c0c0c;letter-spacing:0.869px;-webkit-text-stroke:0.18px #0c0c0c;">ON</span>
<span id="t119" class="t " style="left:278.20px;top:865.00px;font-size:17.50px;color:#2828dc;">1</span>
<span id="t120" class="t " style="left:297.60px;top:865.00px;font-size:17.50px;color:#2828dc;letter-spacing:-0.118px;">Labor to Hang 12 Ga. 12' 0" Wire Cut To 6' 0"</span>
<span id="t121" class="t " style="left:919.40px;top:865.00px;font-size:17.50px;color:#2828dc;letter-spacing:-0.107px;transform:scaleX(0.9500);transform-origin:0 0;">$0.00</span>
<span id="t122" class="t " style="left:1040.40px;top:865.00px;font-size:17.50px;color:#2828dc;letter-spacing:-0.056px;transform:scaleX(0.9500);transform-origin:0 0;">0.00</span>
<span id="t123" class="t " style="left:157.70px;top:899.00px;font-size:10.70px;color:#0c0c0c;letter-spacing:0.869px;-webkit-text-stroke:0.18px #0c0c0c;">ON</span>
<span id="t124" class="t " style="left:278.20px;top:898.00px;font-size:17.50px;color:#2828dc;">1</span>
<span id="t125" class="t " style="left:297.60px;top:898.00px;font-size:17.50px;color:#2828dc;letter-spacing:-0.060px;">Labor for 24"x 24" MT Grid</span>
<span id="t126" class="t " style="left:919.40px;top:898.00px;font-size:17.50px;color:#2828dc;letter-spacing:-0.107px;transform:scaleX(0.9500);transform-origin:0 0;">$0.00</span>
<span id="t127" class="t " style="left:1040.40px;top:898.00px;font-size:17.50px;color:#2828dc;letter-spacing:-0.056px;transform:scaleX(0.9500);transform-origin:0 0;">0.00</span>
<span id="t128" class="t " style="left:157.70px;top:932.00px;font-size:10.70px;color:#0c0c0c;letter-spacing:0.869px;-webkit-text-stroke:0.18px #0c0c0c;">ON</span>
<span id="t129" class="t " style="left:278.20px;top:930.00px;font-size:17.50px;color:#2828dc;">1</span>
<span id="t130" class="t " style="left:297.60px;top:930.00px;font-size:17.50px;color:#2828dc;letter-spacing:0.098px;">Labor 1" Shot/Pin/Clip 4' 0" o/c</span>
<span id="t131" class="t " style="left:919.40px;top:930.00px;font-size:17.50px;color:#2828dc;letter-spacing:-0.107px;transform:scaleX(0.9500);transform-origin:0 0;">$0.00</span>
<span id="t132" class="t " style="left:1040.40px;top:930.00px;font-size:17.50px;color:#2828dc;letter-spacing:-0.056px;transform:scaleX(0.9500);transform-origin:0 0;">0.00</span>
<span id="t133" class="t " style="left:157.70px;top:964.00px;font-size:10.70px;color:#0c0c0c;letter-spacing:0.869px;-webkit-text-stroke:0.18px #0c0c0c;">ON</span>
<span id="t134" class="t " style="left:278.20px;top:963.00px;font-size:17.50px;color:#2828dc;">1</span>
<span id="t135" class="t " style="left:297.60px;top:963.00px;font-size:17.50px;color:#2828dc;letter-spacing:0.127px;">Labor for 12' 0" WM Wall Molding</span>
<span id="t136" class="t " style="left:919.40px;top:963.00px;font-size:17.50px;color:#2828dc;letter-spacing:-0.107px;transform:scaleX(0.9500);transform-origin:0 0;">$0.00</span>
<span id="t137" class="t " style="left:1040.40px;top:963.00px;font-size:17.50px;color:#2828dc;letter-spacing:-0.056px;transform:scaleX(0.9500);transform-origin:0 0;">0.00</span>
<div class="b " style="left:1148.00px;top:282.00px;width:273.00px;height:86.00px;background:#202784;box-shadow:3px 3px 3px 0px rgba(20,20,30,0.78);"></div>
<div class="b " style="left:1148.00px;top:395.00px;width:273.00px;height:86.00px;background:#202784;box-shadow:3px 3px 3px 0px rgba(20,20,30,0.78);"></div>
<div class="b " style="left:1148.00px;top:507.00px;width:273.00px;height:45.00px;background:#202784;"></div>
<span id="t138" class="t " style="left:1222.40px;top:290.00px;font-size:17.50px;color:#d9dcea;letter-spacing:-0.134px;">Project Net Cost</span>
<span id="t139" class="t " style="left:1214.80px;top:334.00px;font-size:26.60px;color:#e9ebf2;font-weight:bold;letter-spacing:0.832px;">$18,481.48</span>
<span id="t140" class="t " style="left:1193.80px;top:403.00px;font-size:17.50px;color:#d9dcea;letter-spacing:-0.322px;">Hours</span>
<span id="t141" class="t " style="left:1318.20px;top:403.00px;font-size:17.50px;color:#d9dcea;letter-spacing:-0.303px;">Mandays</span>
<span id="t142" class="t " style="left:1173.80px;top:447.00px;font-size:26.60px;color:#e9ebf2;font-weight:bold;letter-spacing:0.771px;">559.75</span>
<span id="t143" class="t " style="left:1317.80px;top:447.00px;font-size:26.60px;color:#e9ebf2;font-weight:bold;letter-spacing:0.909px;">69.97</span>
<span id="t144" class="t " style="left:1154.60px;top:560.00px;font-size:17.50px;color:#1b1b1b;letter-spacing:0.065px;">Condition:</span>
<span id="t145" class="t " style="left:1154.60px;top:593.00px;font-size:17.50px;color:#1b1b1b;letter-spacing:-1.184px;">Page:</span>
<span id="t146" class="t " style="left:1154.60px;top:627.00px;font-size:17.50px;color:#1b1b1b;letter-spacing:-0.405px;">Section:</span>
<span id="t147" class="t " style="left:1154.60px;top:660.00px;font-size:17.50px;color:#1b1b1b;letter-spacing:-0.592px;">Scenario:</span>
<span id="t148" class="t " style="left:1154.60px;top:694.00px;font-size:17.50px;color:#1b1b1b;letter-spacing:-0.852px;">Bid:</span>
<div class="b " style="left:1148.00px;top:718.60px;width:273.00px;height:5.40px;background:#e4e4e4;border:1px solid #c6c6c6;"></div>
</div>
</body></html>
